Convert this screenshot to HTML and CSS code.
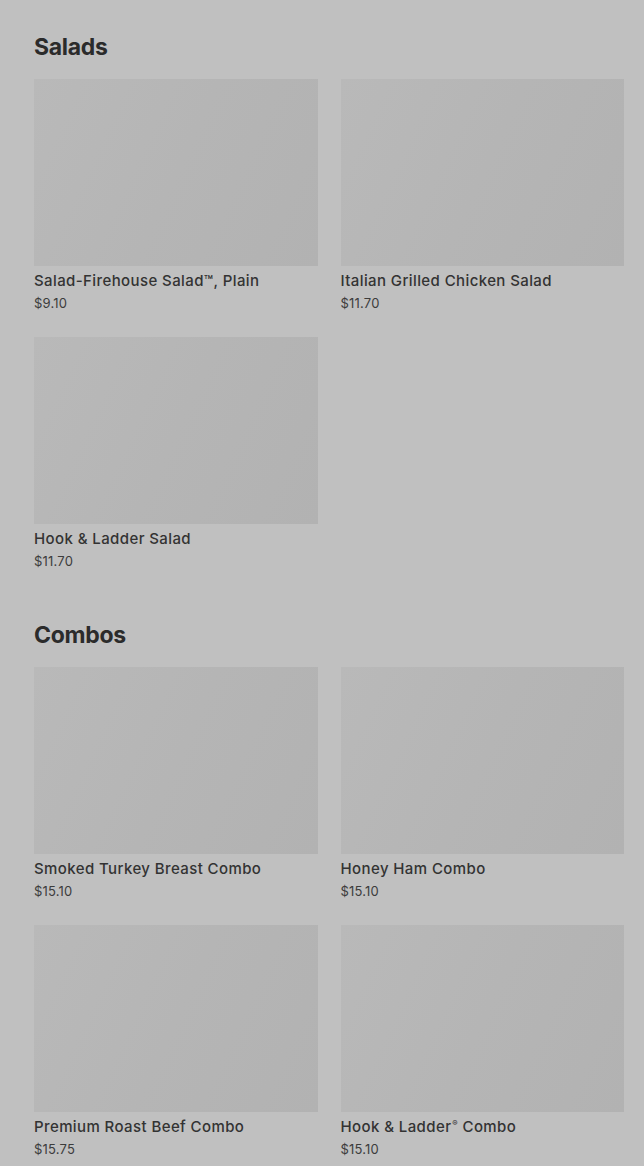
FILE: index.html
```html
<!DOCTYPE html>
<html lang="en">
<head>
<meta charset="utf-8">
<title>Menu</title>
<link rel="stylesheet" href="styles.css">
</head>
<body>
<main class="menu">
  <section class="section">
    <h2 class="section-title">Salads</h2>
    <div class="grid">
      <article class="item">
        <div class="thumb"></div>
        <h3 class="item-name">Salad-Firehouse Salad™, Plain</h3>
        <p class="item-price">$9.10</p>
      </article>
      <article class="item">
        <div class="thumb"></div>
        <h3 class="item-name">Italian Grilled Chicken Salad</h3>
        <p class="item-price">$11.70</p>
      </article>
      <article class="item">
        <div class="thumb"></div>
        <h3 class="item-name">Hook &amp; Ladder Salad</h3>
        <p class="item-price">$11.70</p>
      </article>
    </div>
  </section>
  <section class="section">
    <h2 class="section-title">Combos</h2>
    <div class="grid">
      <article class="item">
        <div class="thumb"></div>
        <h3 class="item-name">Smoked Turkey Breast Combo</h3>
        <p class="item-price">$15.10</p>
      </article>
      <article class="item">
        <div class="thumb"></div>
        <h3 class="item-name">Honey Ham Combo</h3>
        <p class="item-price">$15.10</p>
      </article>
      <article class="item">
        <div class="thumb"></div>
        <h3 class="item-name">Premium Roast Beef Combo</h3>
        <p class="item-price">$15.75</p>
      </article>
      <article class="item">
        <div class="thumb"></div>
        <h3 class="item-name">Hook &amp; Ladder<sup class="reg">®</sup> Combo</h3>
        <p class="item-price">$15.10</p>
      </article>
    </div>
  </section>
</main>
</body>
</html>
```

FILE: styles.css
```css
* { box-sizing: border-box; }
html, body {
  margin: 0;
  padding: 0;
  background: #c0c0c0;
}
body {
  font-family: Inter, "Noto Sans", "Liberation Sans", sans-serif;
  color: #333333;
}
.menu {
  padding: 31px 20px 0 34px;
  display: flex;
  flex-direction: column;
  gap: 48px;
}
.section-title {
  margin: 0;
  font-size: 23px;
  line-height: 32px;
  font-weight: 700;
  letter-spacing: -0.3px;
  color: #2b2b2b;
}
.grid {
  margin-top: 16px;
  display: grid;
  grid-template-columns: 1fr 1fr;
  column-gap: 23px;
  row-gap: 24px;
}
.item { display: flex; flex-direction: column; }
.thumb {
  height: 187px;
  background: linear-gradient(115deg, #b9b9b9 0%, #b5b5b5 50%, #b2b2b2 100%);
}
.item-name {
  margin: 5px 0 0;
  font-size: 15px;
  line-height: 20px;
  font-weight: 500;
  letter-spacing: 0.4px;
  color: #333333;
}
.reg {
  font-size: 8px;
  vertical-align: top;
  line-height: 12px;
  margin-left: 1px;
}
.item-price {
  margin: 2px 0 0;
  font-size: 13px;
  line-height: 20px;
  font-weight: 400;
  color: #3c3c3c;
  letter-spacing: 0.2px;
}
```
